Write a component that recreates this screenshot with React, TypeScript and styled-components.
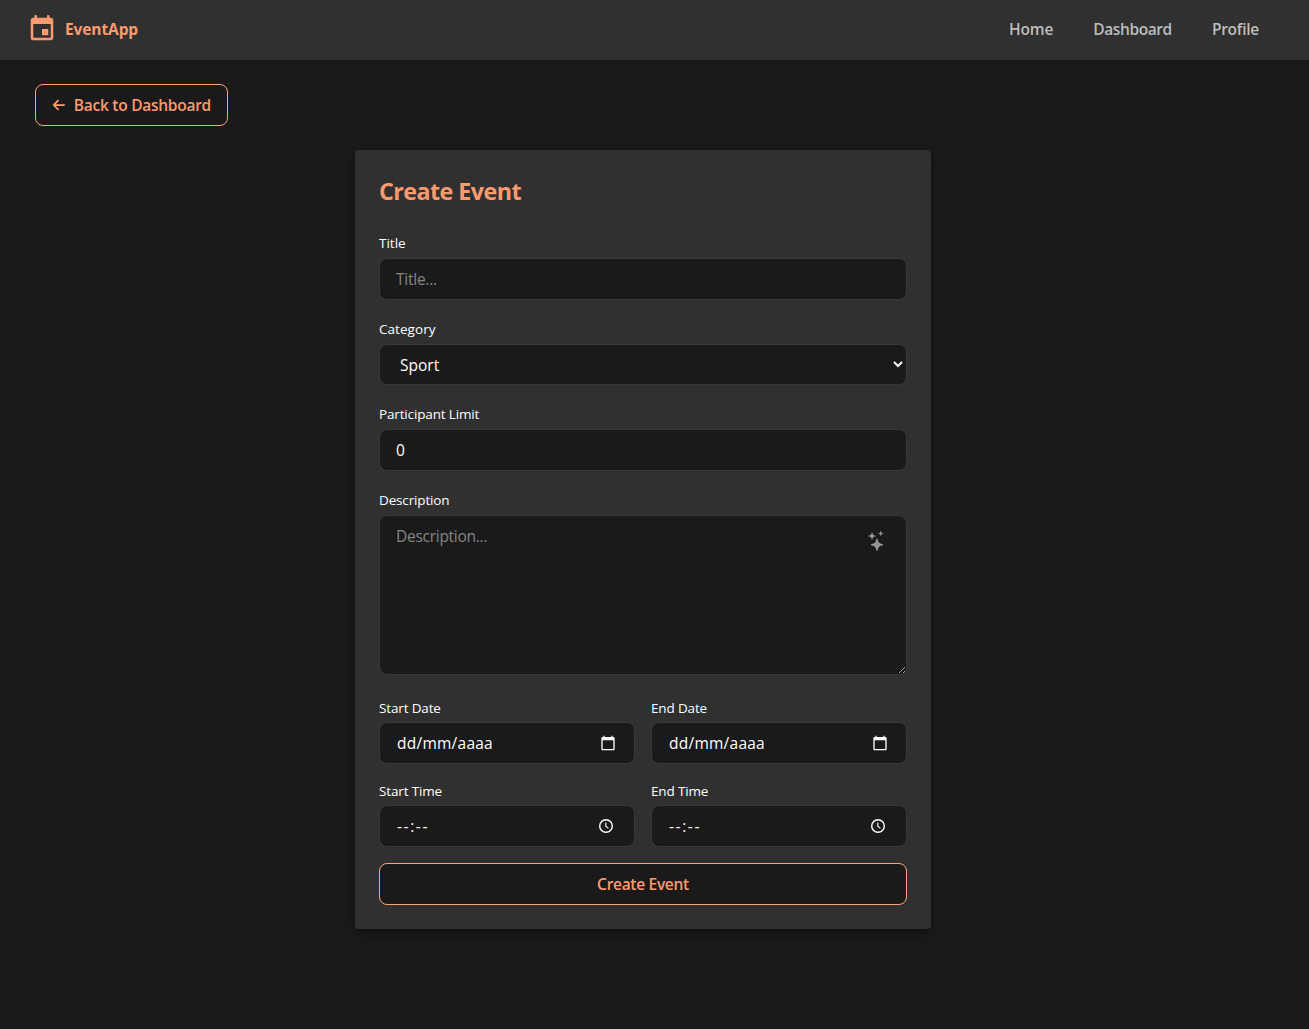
import React from 'react';
import styled, { createGlobalStyle } from 'styled-components';
import { MdEvent } from 'react-icons/md';
import { FaArrowLeft } from 'react-icons/fa6';
import { BsStars } from 'react-icons/bs';

const colors = {
  page: '#1a1a1a',
  surface: '#303030',
  accent: '#ff9b6e',
  accentBorder: '#ffa374',
  border: '#383838',
  muted: '#858585',
  nav: '#bdbdbd',
};

const GlobalStyle = createGlobalStyle`
  * { box-sizing: border-box; }
  body {
    margin: 0;
    background: ${colors.page};
    color: #fff;
    font-family: "Segoe UI", "Open Sans", "Noto Sans", sans-serif;
    font-size: 15.5px;
  }
`;

interface Tracked {
  $track?: number;
}

const Header = styled.header`
  height: 60px;
  padding: 0 50px 2px 27px;
  display: flex;
  align-items: center;
  justify-content: space-between;
  background: ${colors.surface};
  box-shadow: 0 2px 5px rgba(0, 0, 0, 0.2);
`;

const Brand = styled.div`
  display: flex;
  align-items: center;
  gap: 8px;
  color: ${colors.accent};
  font-weight: 700;
  letter-spacing: -0.1px;
`;

const Nav = styled.nav`
  display: flex;
  gap: 40px;
`;

const NavLink = styled.a<Tracked>`
  color: ${colors.nav};
  font-weight: 600;
  letter-spacing: ${(p) => p.$track ?? 0}px;
`;

const Main = styled.main`
  min-height: 969px;
  padding: 24px 58px 0 35px;
  display: flex;
  flex-direction: column;
  align-items: flex-start;
  gap: 24px;
`;

const Button = styled.button<Tracked>`
  height: 42px;
  padding: 0 16px;
  display: flex;
  align-items: center;
  justify-content: center;
  gap: 8px;
  border: 1px solid ${colors.accentBorder};
  border-radius: 8px;
  background: ${colors.page};
  color: ${colors.accent};
  font: inherit;
  font-weight: 600;
  letter-spacing: ${(p) => p.$track ?? 0}px;
`;

const BackButton = styled(Button)`
  width: 193px;
  justify-content: flex-start;
  white-space: nowrap;
`;

const Card = styled.form`
  width: 576px;
  align-self: center;
  padding: 23px 24px 24px;
  display: flex;
  flex-direction: column;
  border-radius: 4px;
  background: ${colors.surface};
  box-shadow: 0 4px 8px rgba(0, 0, 0, 0.4);
`;

const Heading = styled.h2`
  margin: 0 0 24px;
  color: ${colors.accent};
  font-size: 23.3px;
  line-height: 36px;
  letter-spacing: -0.55px;
`;

const Field = styled.div<{ $gap: number }>`
  display: flex;
  flex-direction: column;
  margin-bottom: ${(p) => p.$gap}px;
`;

const Label = styled.label<Tracked & { $compact?: boolean }>`
  margin-bottom: ${(p) => (p.$compact ? 4 : 5)}px;
  font-size: 13.5px;
  line-height: 20px;
  letter-spacing: ${(p) => p.$track ?? 0}px;
`;

const control = `
  width: 100%;
  height: 42px;
  margin: 0;
  border: 1px solid ${colors.border};
  border-radius: 8px;
  background: ${colors.page};
  color: #fff;
  font: inherit;
  outline: none;
`;

const Input = styled.input<Tracked>`
  ${control}
  padding: 0 16px 1px;
  letter-spacing: ${(p) => p.$track ?? 0}px;
  &::placeholder { color: ${colors.muted}; }
`;

const Select = styled.select`
  ${control}
  height: 41px;
  padding: 0 0 0 16px;
`;

const TextAreaWrap = styled.div`
  position: relative;
  height: 160px;
`;

const TextArea = styled.textarea`
  ${control}
  display: block;
  height: 160px;
  padding: 9px 48px 9px 16px;
  letter-spacing: -0.27px;
  resize: vertical;
  &::placeholder { color: ${colors.muted}; }
`;

const SuggestIcon = styled(BsStars)`
  position: absolute;
  top: 16px;
  right: 20px;
  color: #949494;
`;

const Columns = styled.div`
  display: grid;
  grid-template-columns: 1fr 1fr;
  gap: 16px;
`;

const Picker = styled.div`
  ${control}
  padding: 0 18px 1px 17px;
  display: flex;
  align-items: center;
  justify-content: space-between;
`;

const Mask = styled.span<Tracked>`
  letter-spacing: ${(p) => p.$track ?? 0}px;
`;

const ClockIcon = styled.svg`
  margin-right: 2px;
`;

const Calendar = () => (
  <svg width="16" height="16" viewBox="0 0 24 24" fill="#fff">
    <path d="M20 3h-1V1h-2v2H7V1H5v2H4c-1.1 0-2 .9-2 2v16c0 1.1.9 2 2 2h16c1.1 0 2-.9 2-2V5c0-1.1-.9-2-2-2zm0 18H4V8h16v13z" />
  </svg>
);

const Clock = () => (
  <ClockIcon width="16" height="16" viewBox="0 0 16 16" fill="none" stroke="#fff" strokeWidth="1.4">
    <circle cx="8" cy="8" r="6.3" />
    <path d="M7.8 4.4v3.9l2.6 2.1" strokeWidth="1.1" />
  </ClockIcon>
);

const DateField = ({ label }: { label: string }) => (
  <Field $gap={17}>
    <Label $compact $track={-0.15}>{label}</Label>
    <Picker>
      <Mask $track={0.25}>dd/mm/aaaa</Mask>
      <Calendar />
    </Picker>
  </Field>
);

const TimeField = ({ label }: { label: string }) => (
  <Field $gap={16}>
    <Label $compact $track={-0.15}>{label}</Label>
    <Picker>
      <Mask $track={1.6}>--:--</Mask>
      <Clock />
    </Picker>
  </Field>
);

export default function App() {
  return (
    <>
      <GlobalStyle />
      <Header>
        <Brand>
          <MdEvent size={30} />
          EventApp
        </Brand>
        <Nav>
          <NavLink $track={-0.15}>Home</NavLink>
          <NavLink $track={-0.4}>Dashboard</NavLink>
          <NavLink $track={-0.25}>Profile</NavLink>
        </Nav>
      </Header>
      <Main>
        <BackButton $track={-0.26}>
          <FaArrowLeft size={14} />
          Back to Dashboard
        </BackButton>
        <Card>
          <Heading>Create Event</Heading>
          <Field $gap={19}>
            <Label>Title</Label>
            <Input placeholder="Title..." $track={-0.25} />
          </Field>
          <Field $gap={19}>
            <Label $track={0.05}>Category</Label>
            <Select defaultValue="Sport">
              <option>Sport</option>
            </Select>
          </Field>
          <Field $gap={19}>
            <Label $track={-0.15}>Participant Limit</Label>
            <Input defaultValue="0" />
          </Field>
          <Field $gap={23}>
            <Label $track={-0.15}>Description</Label>
            <TextAreaWrap>
              <TextArea placeholder="Description..." />
              <SuggestIcon size={20} />
            </TextAreaWrap>
          </Field>
          <Columns>
            <DateField label="Start Date" />
            <DateField label="End Date" />
          </Columns>
          <Columns>
            <TimeField label="Start Time" />
            <TimeField label="End Time" />
          </Columns>
          <Button type="button" $track={-0.3}>Create Event</Button>
        </Card>
      </Main>
    </>
  );
}
